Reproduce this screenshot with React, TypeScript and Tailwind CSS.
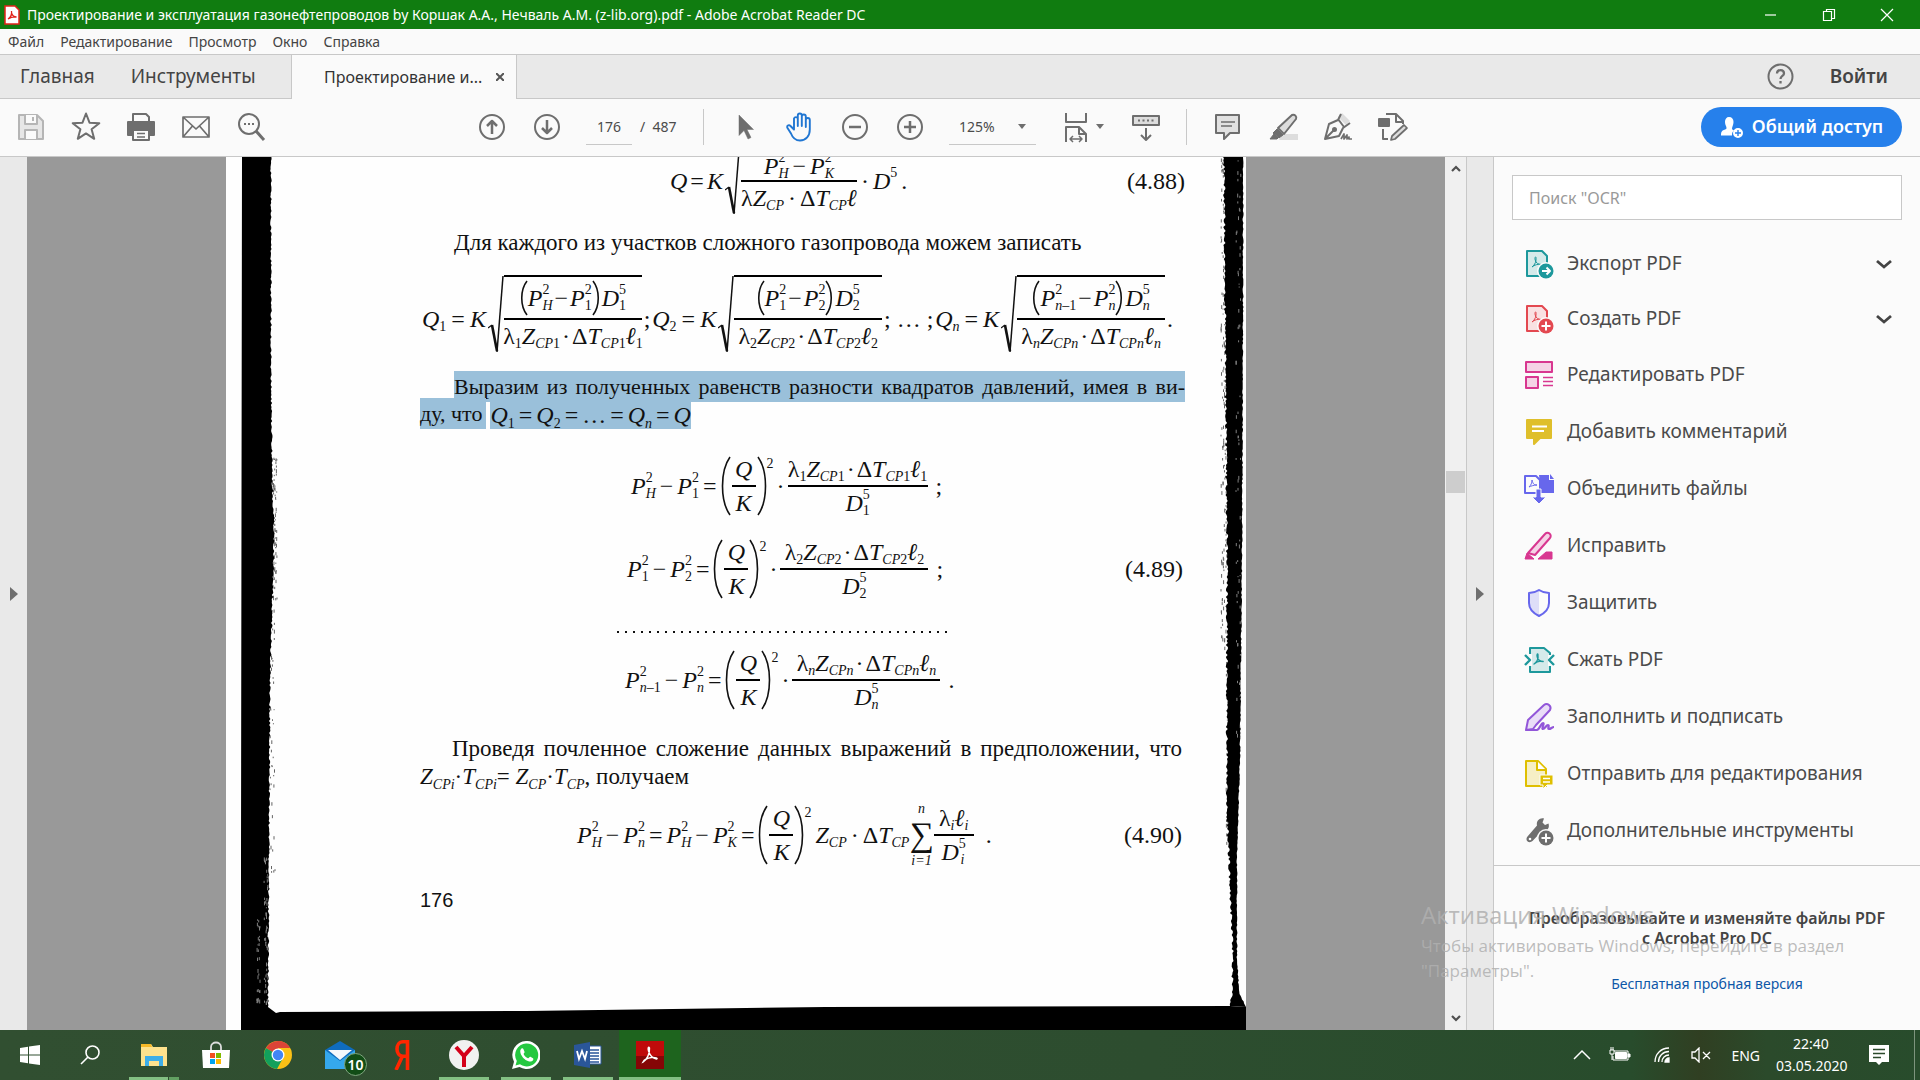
import React from "react";

type Kids = { children?: React.ReactNode };

/* ---------- Formula building blocks ---------- */

function V({ c, sup, sub = "" }: { c: string; sup?: string; sub?: string }) {
  const letters = sub.replace(/[0-9]+$/, "");
  const digits = sub.slice(letters.length);
  return (
    <span className="inline-flex items-center">
      {c === "λ" ? <span>λ</span> : <i>{c}</i>}
      <span className="inline-flex flex-col">
        <sup className="static top-0 h-4 text-[14px] leading-4">{sup}</sup>
        <sub className="static bottom-0 h-4 text-[14px] leading-4">
          <i>{letters}</i>
          {digits}
        </sub>
      </span>
    </span>
  );
}

function Frac({ top, bottom, className = "" }: { top: React.ReactNode; bottom: React.ReactNode; className?: string }) {
  return (
    <span className={"inline-flex flex-col text-center " + className}>
      <span className="flex h-[35px] items-center justify-center border-b border-black pt-0.5">{top}</span>
      <span className="flex h-[35px] items-center justify-center border-t border-black pb-0.5">{bottom}</span>
    </span>
  );
}

function Root({ top, bottom, className = "" }: { top: React.ReactNode; bottom: React.ReactNode; className?: string }) {
  return (
    <span className="ml-0.5 inline-flex">
      <svg className="h-[88px] w-4" viewBox="0 0 16 88" fill="none" stroke="#111">
        <path d="M0 53l4-3" strokeWidth="1.2" />
        <path d="M4 50l5 26" strokeWidth="2.6" />
        <path d="M9 77L15 1" strokeWidth="1.5" />
      </svg>
      <span className={"inline-flex flex-col " + className}>
        <span className="flex h-11 items-center justify-center border-t-2 border-b border-black">{top}</span>
        <span className="flex h-11 items-start justify-center border-t border-black">{bottom}</span>
      </span>
    </span>
  );
}

function Paren({ right, tall }: { right?: boolean; tall?: boolean }) {
  return (
    <svg className={tall ? "h-[60px] w-2.5" : "h-9 w-2"} viewBox={tall ? "0 0 10 60" : "0 0 8 36"} fill="none" stroke="#111" strokeWidth="1.6">
      {tall ? (
        <path d={right ? "M1 1C11 15 11 45 1 59" : "M9 1C-1 15-1 45 9 59"} />
      ) : (
        <path d={right ? "M1 1C8 10 8 26 1 35" : "M7 1C0 10 0 26 7 35"} />
      )}
    </svg>
  );
}

const Op = ({ children }: Kids) => <span className="px-1">{children}</span>;

function LZT({ n }: { n: string }) {
  return (
    <>
      <V c="λ" sub={n} />
      <V c="Z" sub={"CP" + n} />
      <span className="px-0.5">·</span>
      <span>Δ</span>
      <V c="T" sub={"CP" + n} />
      <V c="ℓ" sub={n} />
    </>
  );
}

function QK() {
  return (
    <span className="inline-flex items-center">
      <Paren tall />
      <Frac className="mx-px w-6" top={<i>Q</i>} bottom={<i>K</i>} />
      <Paren tall right />
      <sup className="static h-[60px] text-[14px] leading-4">2</sup>
    </span>
  );
}

function QRoot({ n, a, b }: { n: string; a: string; b: string }) {
  return (
    <span className="inline-flex items-center">
      <V c="Q" sub={n} />
      <span className="px-[5px]">=</span>
      <i>K</i>
      <Root
        className={n === "1" ? "w-[138px]" : "w-[148px]"}
        top={
          <>
            <Paren />
            <V c="P" sup="2" sub={a} />
            <span className="px-0.5">−</span>
            <V c="P" sup="2" sub={b} />
            <Paren right />
            <span className="w-0.5" />
            <V c="D" sup="5" sub={n} />
          </>
        }
        bottom={<LZT n={n} />}
      />
    </span>
  );
}

function DiffRow({ a, b, n, end, wide }: { a: string; b: string; n: string; end: string; wide?: boolean }) {
  return (
    <div className="flex h-20 items-center">
      <V c="P" sup="2" sub={a} />
      <Op>−</Op>
      <V c="P" sup="2" sub={b} />
      <Op>=</Op>
      <QK />
      <span className="px-[3px]">·</span>
      <Frac className={wide ? "w-[148px]" : "w-[140px]"} top={<LZT n={n} />} bottom={<V c="D" sup="5" sub={n} />} />
      <span className="pl-2">{end}</span>
    </div>
  );
}

/* ---------- Scanned page ---------- */

function noise(i: number) {
  const s = Math.sin(i * 127.1) * 43758.5453;
  return s - Math.floor(s);
}

function edge(points: [number, number][], amp: number, seed: number) {
  const out: string[] = [];
  for (let k = 0; k < points.length - 1; k++) {
    const [x0, y0] = points[k];
    const [x1, y1] = points[k + 1];
    const n = Math.max(1, Math.round(Math.abs(y1 - y0) / 2));
    for (let j = 0; j < n; j++) {
      const t = j / n;
      out.push((x0 + (x1 - x0) * t + (noise(seed + k * 991 + j) - 0.5) * amp).toFixed(1) + "," + (y0 + (y1 - y0) * t).toFixed(1));
    }
  }
  const last = points[points.length - 1];
  out.push(last[0] + "," + last[1]);
  return out.join(" ");
}

function specks(x: number, w: number, y: number, h: number, count: number, seed: number) {
  let d = "";
  for (let i = 0; i < count; i++) {
    const px = x + noise(seed + i) * w;
    const py = y + noise(seed + 500 + i) * h;
    d += "M" + px.toFixed(1) + " " + py.toFixed(1) + "v" + (1 + noise(seed + 900 + i) * 3).toFixed(1);
  }
  return d;
}

function ScanEdges() {
  const left = edge([[45, 0], [45, 200], [46, 320], [48, 380], [46, 460], [44, 520], [43, 700], [42, 850]], 1.6, 3);
  const rightIn = edge([[998, 0], [999, 150], [1001, 400], [1001, 650], [1004, 730], [1007, 800], [1006, 835], [1004, 849]], 2.5, 50);
  const rightOut = edge([[1020, 850], [1013, 835], [1011, 800], [1011, 700], [1014, 600], [1016, 400], [1017, 150], [1017, 0]], 1, 90);
  return (
    <svg className="absolute inset-0 h-full w-full" viewBox="0 0 1020 873" preserveAspectRatio="none" aria-hidden="true">
      <polygon points={"16,0 " + left + " 50,856 54,855 300,854 600,850 1004,849 1020,850 1020,873 15,873 15,700"} fill="#000" />
      <polygon points={rightIn + " " + rightOut} fill="#000" />
      <path d={specks(46, 5, 300, 150, 80, 11) + specks(44, 5, 450, 280, 40, 31) + specks(995, 6, 0, 500, 170, 71) + specks(1000, 4, 500, 200, 40, 91)} stroke="#000" strokeWidth="1" opacity="0.6" />
      <path d={specks(31, 3, 760, 90, 30, 131) + specks(38, 4, 700, 150, 50, 171) + specks(1010, 5, 0, 600, 70, 211)} stroke="#fff" strokeWidth="1" opacity="0.5" />
    </svg>
  );
}

function ScannedPage() {
  return (
    <article className="relative w-[1020px] shrink-0 overflow-hidden bg-[#fefefe] pr-[61px] pl-[194px] font-['Liberation_Serif',serif] text-[24px] leading-8 text-[#111]">
      <ScanEdges />
      <div className="relative">
        <div className="-mt-5 flex h-[88px] items-center pl-[250px]">
          <i>Q</i>
          <span className="px-[3px]">=</span>
          <i>K</i>
          <Root
            className="w-[116px]"
            top={
              <span className="flex items-center pt-3">
                <V c="P" sup="2" sub="H" />
                <Op>−</Op>
                <V c="P" sup="2" sub="K" />
              </span>
            }
            bottom={
              <>
                <span>λ</span>
                <V c="Z" sub="CP" />
                <Op>·</Op>Δ
                <V c="T" sub="CP" />
                <i>ℓ</i>
              </>
            }
          />
          <span className="px-1">·</span>
          <V c="D" sup="5" />
          <Op>.</Op>
          <span className="ml-auto">(4.88)</span>
        </div>

        <p className="mt-0.5 h-[31px] pl-[34px] text-[23px] leading-[31px] whitespace-nowrap">
          Для каждого из участков сложного газопровода можем записать
        </p>

        <div className="mt-[17px] flex h-[88px] items-center justify-between pl-0.5">
          <QRoot n="1" a="H" b="1" />
          <span>;</span>
          <QRoot n="2" a="1" b="2" />
          <span>;&nbsp;…&nbsp;;</span>
          <QRoot n="n" a="n–1" b="n" />
          <span className="pr-3">.</span>
        </div>

        <div className="mt-2 text-[22px] leading-[31px] whitespace-nowrap">
          <p className="ml-[34px] h-[31px] bg-[#9ac0da] [text-align-last:justify]">
            Выразим из полученных равенств разности квадратов давлений, имея в ви-
          </p>
          <p className="-mt-1 flex h-[31px]">
            <span className="bg-[#9ac0da] pr-1">ду, что</span>
            <span className="mt-1 ml-1 flex h-[27px] items-center bg-[#9ac0da] text-[24px]">
              <V c="Q" sub="1" />
              <Op>=</Op>
              <V c="Q" sub="2" />
              <Op>=</Op>…<Op>=</Op>
              <V c="Q" sub="n" />
              <Op>=</Op>
              <i>Q</i>
            </span>
          </p>
        </div>

        <div className="mt-[17px] pl-[211px]">
          <DiffRow a="H" b="1" n="1" end=";" />
        </div>
        <div className="mt-[3px] flex items-center justify-between pl-[207px]">
          <DiffRow a="1" b="2" n="2" end=";" wide />
          <span className="mr-0.5">(4.89)</span>
        </div>
        <div className="mt-[13px] flex h-5 items-center pl-[197px]">
          <span className="h-0.5 w-[336px] bg-[repeating-linear-gradient(90deg,#111_0_2px,transparent_2px_8px)]" />
        </div>
        <div className="-mt-0.5 pl-[205px]">
          <DiffRow a="n–1" b="n" n="n" end="." wide />
        </div>

        <div className="mt-[15px] text-[23px] leading-7 whitespace-nowrap">
          <p className="mr-[3px] ml-8 [text-align-last:justify]">
            Проведя почленное сложение данных выражений в предположении, что
          </p>
          <p className="flex h-7 items-center">
            <V c="Z" sub="CPi" />·<V c="T" sub="CPi" />=&nbsp;
            <V c="Z" sub="CP" />·<V c="T" sub="CP" />, получаем
          </p>
        </div>

        <div className="mt-1 flex h-20 items-center pl-[157px]">
          <V c="P" sup="2" sub="H" />
          <Op>−</Op>
          <V c="P" sup="2" sub="n" />
          <Op>=</Op>
          <V c="P" sup="2" sub="H" />
          <Op>−</Op>
          <V c="P" sup="2" sub="K" />
          <Op>=</Op>
          <QK />
          <span className="w-1" />
          <V c="Z" sub="CP" />
          <Op>·</Op>Δ
          <V c="T" sub="CP" />
          <span className="flex flex-col items-center text-[14px] leading-4">
            <i>n</i>
            <span className="text-[34px] leading-9">∑</span>
            <i>i=1</i>
          </span>
          <Frac
            className="w-10"
            top={
              <>
                <V c="λ" sub="i" />
                <V c="ℓ" sub="i" />
              </>
            }
            bottom={<V c="D" sup="5" sub="i" />}
          />
          <span className="pl-3">.</span>
          <span className="mr-[3px] ml-auto">(4.90)</span>
        </div>

        <p className="mt-[11px] h-7 font-['Liberation_Sans',sans-serif] text-[20px] leading-7">176</p>
      </div>
    </article>
  );
}

/* ---------- Icons ---------- */

function Icon({ children, className = "size-8" }: Kids & { className?: string }) {
  return (
    <svg className={className} viewBox="0 0 32 32" fill="none" stroke="#6e6e6e" strokeWidth="2" strokeLinejoin="round" aria-hidden="true">
      {children}
    </svg>
  );
}

const Caret = () => (
  <svg className="h-[5px] w-2" viewBox="0 0 8 5" fill="#6e6e6e" aria-hidden="true">
    <path d="M0 0h8L4 5z" />
  </svg>
);

const icons = {
  save: (
    <Icon>
      <path d="M4 4h18l6 6v18H4z" stroke="#b5b5b5" fill="#e6e6e6" />
      <path d="M10 4v9h12V4M10 28v-9h12v9M18 6v4" stroke="#b5b5b5" fill="#fafafa" />
    </Icon>
  ),
  star: (
    <Icon>
      <path d="M16 2.500l3.500 9.200 9.800.5-7.700 6.100 2.600 9.500-8.200-5.400-8.200 5.400 2.600-9.500-7.700-6.100 9.800-.5z" />
    </Icon>
  ),
  print: (
    <Icon>
      <path d="M8 12V3h13l3 3v6" />
      <path d="M3 11h26v13h-5v-5H8v5H3z" fill="#6e6e6e" />
      <path d="M8 19h16v10H8z" fill="#fafafa" />
      <path d="M12 22.500h8M12 26h8" strokeWidth="1.500" />
    </Icon>
  ),
  mail: (
    <Icon>
      <path d="M3 6h26v20H3zM3 6l13 12L29 6M3 26l9.500-11M29 26l-9.500-11" strokeWidth="1.700" />
    </Icon>
  ),
  find: (
    <Icon>
      <circle cx="14" cy="13" r="10" />
      <path d="M21 20l8 9" strokeWidth="3" />
      <path d="M9 13h2M13 13h2M17 13h2" />
    </Icon>
  ),
  up: (
    <Icon>
      <circle cx="16" cy="16" r="12" />
      <path d="M16 23V10M11 15l5-5 5 5" strokeWidth="2.500" />
    </Icon>
  ),
  down: (
    <Icon>
      <circle cx="16" cy="16" r="12" />
      <path d="M16 9v13M11 17l5 5 5-5" strokeWidth="2.500" />
    </Icon>
  ),
  select: (
    <Icon>
      <path d="M10 4v20.500l5-5 4 8.500 3-1.500-4-8h6.500z" fill="#6e6e6e" strokeWidth="0.500" />
    </Icon>
  ),
  hand: (
    <Icon>
      <path
        d="M10 17V7.500a2 2 0 0 1 3.800 0V15V4.500a2 2 0 0 1 4 0V15V5.500a2 2 0 0 1 4 0V16V9a2 2 0 0 1 4 0v9.500C25.800 25 22 29.500 16 29.500c-5 0-7.500-3-9-7L3.200 16.500c-.6-2 2-3 3.300-1.500L10 18.500z"
        stroke="#2076d2"
        strokeWidth="1.900"
      />
    </Icon>
  ),
  minus: (
    <Icon>
      <circle cx="16" cy="16" r="12" />
      <path d="M10 16h12" strokeWidth="2.500" />
    </Icon>
  ),
  plus: (
    <Icon>
      <circle cx="16" cy="16" r="12" />
      <path d="M10 16h12M16 10v12" strokeWidth="2.500" />
    </Icon>
  ),
  fit: (
    <Icon>
      <path d="M6 2v9h20V2M6 31V16h13l7 7v8M19 16v7h7" />
      <path d="M10 28h12M13 25l-3 3 3 3M19 25l3 3-3 3" strokeWidth="1.500" />
    </Icon>
  ),
  keys: (
    <Icon>
      <path d="M3 5h26v9H3z" fill="#ddd" />
      <path d="M8 9.500h2M12.500 9.500h2M17 9.500h2M21.500 9.500h2" />
      <path d="M16 17v12M11 24l5 5 5-5" />
    </Icon>
  ),
  comment: (
    <Icon>
      <path d="M4 4h23v18h-9l-6 6v-6H4z" fill="#e1e1e1" />
      <path d="M9 11h14M9 15h11" strokeWidth="1.500" />
    </Icon>
  ),
  marker: (
    <Icon>
      <path d="M16 23h15v6H12z" fill="#ddd" stroke="none" />
      <path d="M11 17L25 4a3 3 0 0 1 4 4L17 23z" fill="#ddd" />
      <path d="M10 18l6 6-4 3-6-5zM3 28l4-5 4 4-1 1z" fill="#6e6e6e" strokeWidth="1" />
    </Icon>
  ),
  pen: (
    <Icon>
      <path d="M20 2l8 8-4 4-8-8z" fill="#ddd" stroke="none" />
      <path d="M19 3l-3 6-9 4-4 15 14-3 4-8 7-5M16 8l6 8M4 27l8-8" />
      <circle cx="12.500" cy="18.500" r="1.500" fill="#6e6e6e" />
      <path d="M19 28l3-5v5l3-4v4l2-2v2h3" strokeWidth="1.700" />
    </Icon>
  ),
  stamp: (
    <Icon>
      <path d="M9 3h10l7 7v3M19 3v8h7M6 18v10h5" />
      <path d="M2 8h10v7H2z" fill="#6e6e6e" />
      <path d="M14 29l1-4 12-11 3 3-12 11z" fill="#ddd" strokeWidth="1.700" />
    </Icon>
  ),
};

function ToolButton({ label, children, className = "w-[55px]" }: Kids & { label: string; className?: string }) {
  return (
    <button type="button" aria-label={label} title={label} className={"flex h-12 items-center justify-center gap-1 " + className}>
      {children}
    </button>
  );
}

const swoosh = "M11 20c3-2 4.500-6 4-9.500-.5-1.500-1.500 0-.8 2.500.8 3 3 4.500 6 4.500-3-.8-7 .5-9.200 2.500z";

const tools: { label: string; icon: React.ReactNode; more?: boolean }[] = [
  {
    label: "Экспорт PDF",
    more: true,
    icon: (
      <>
        <path d="M4 3h15l5 5v20H4z" fill="#d5eaea" stroke="#1d989c" />
        <path d={swoosh} stroke="#1d989c" strokeWidth="1" transform="translate(-2 -1)" />
        <circle cx="23" cy="23" r="9" fill="#fbfbfb" stroke="none" />
        <circle cx="23" cy="23" r="7.500" fill="#1d989c" stroke="none" />
        <path d="M19 23h7M23.500 19.500L27 23l-3.500 3.500" stroke="#fff" />
      </>
    ),
  },
  {
    label: "Создать PDF",
    more: true,
    icon: (
      <>
        <path d="M4 3h15l5 5v20H4z" fill="#f9e1e2" stroke="#e34850" />
        <path d={swoosh} stroke="#e34850" strokeWidth="1" transform="translate(-2 -1)" />
        <circle cx="23" cy="23" r="9" fill="#fbfbfb" stroke="none" />
        <circle cx="23" cy="23" r="7.500" fill="#e34850" stroke="none" />
        <path d="M18.500 23h9M23 18.500v9" stroke="#fff" />
      </>
    ),
  },
  {
    label: "Редактировать PDF",
    icon: (
      <g stroke="#d83790">
        <path d="M3 3h26v10H3zM3 18h12v11H3z" fill="#f5d3e6" />
        <path d="M20 18.500h10M20 22.500h10M20 26.500h10" strokeWidth="1.300" />
      </g>
    ),
  },
  {
    label: "Добавить комментарий",
    icon: (
      <>
        <path d="M4 4h24v18H17l-6 6v-6H4z" fill="#dfbf2b" stroke="#dfbf2b" />
        <path d="M9 10.500h15M9 15h12" stroke="#fff" />
      </>
    ),
  },
  {
    label: "Объединить файлы",
    icon: (
      <g stroke="#6767ec">
        <path d="M16 2h10v5h5v13H18z" fill="#6767ec" stroke="none" />
        <path d="M27 1l4 5h-4z" fill="#6767ec" stroke="none" />
        <path d="M2 3h11l4 4v13H2z" fill="#fbfbfb" />
        <path d="M6 14c2-2 3-4 3-7 1 4 2 5 5 5-3 0-6 1-8 2z" strokeWidth="1" />
        <path d="M13 16h5v8h5l-7 7-7-7h4z" fill="#6767ec" stroke="#fbfbfb" strokeWidth="1" />
      </g>
    ),
  },
  {
    label: "Исправить",
    icon: (
      <g stroke="#d83790">
        <path d="M5 23L22 4a3 3 0 0 1 5 4L12 25z" fill="#f5d3e6" />
        <path d="M2 29l2-6 7 6zM15 29l8-7h6v7z" fill="#d83790" strokeWidth="1" />
      </g>
    ),
  },
  {
    label: "Защитить",
    icon: (
      <>
        <path d="M16 3c-3 2-6 3-10 3v10c0 6 4 10 10 13z" fill="#dedef8" stroke="none" />
        <path d="M16 3c3 2 6 3 10 3v10c0 6-4 10-10 13C10 26 6 22 6 16V6c4 0 7-1 10-3z" stroke="#6767ec" />
      </>
    ),
  },
  {
    label: "Сжать PDF",
    icon: (
      <g stroke="#1d989c">
        <path d="M9 9h16v14H9z" fill="#d5eaea" stroke="none" />
        <path d="M7 10V4h14l6 5v2M7 22v6h20v-6" fill="#d5eaea" />
        <path d="M2 11l5 5-5 5M31 11l-5 5 5 5" strokeWidth="2.400" />
        <path d={swoosh} strokeWidth="1.300" />
      </g>
    ),
  },
  {
    label: "Заполнить и подписать",
    icon: (
      <g stroke="#9256d9">
        <path d="M3 29l2-10L21 4a4 4 0 0 1 6 5L13 24l-3 4z" fill="#e9ddf7" />
        <path d="M3 29h11c3-1 4-7 6-7s-2 6 0 6 3-4 5-4-1 4 1 4 3-2 5-2" strokeWidth="2.200" />
      </g>
    ),
  },
  {
    label: "Отправить для редактирования",
    icon: (
      <g stroke="#dfbf00">
        <path d="M3 3h12l8 8v17H3z" fill="#f6efc5" />
        <path d="M14 3v9h9" fill="#fff" />
        <path d="M17 17h13v10h-6l-4 4v-4h-3z" fill="#dfbf00" stroke="#fbfbfb" strokeWidth="1" />
        <path d="M20 20.500h7M20 24h7" stroke="#fff" strokeWidth="1.300" />
      </g>
    ),
  },
  {
    label: "Дополнительные инструменты",
    icon: (
      <>
        <path
          d="M25.500 8.500l-3.500 1.500-2.500-2.500L21 3.500c-4-1-8 2-7 7L4.500 21.500c-3 4 1.500 7.500 5 4.500L19 16c5 1 8-3 6.500-7.500z"
          fill="#6e6e6e"
          stroke="none"
        />
        <circle cx="7" cy="24" r="1.300" fill="#fff" stroke="none" />
        <circle cx="23" cy="23" r="9" fill="#fbfbfb" stroke="none" />
        <circle cx="23" cy="23" r="7.500" fill="#6e6e6e" stroke="none" />
        <path d="M18.500 23h9M23 18.500v9" stroke="#fff" />
      </>
    ),
  },
];

/* ---------- Window parts ---------- */

function TitleBar() {
  return (
    <header className="flex h-[29px] items-center bg-[#107c10] text-white">
      <svg className="mr-[7px] ml-1 h-5 w-4" viewBox="0 0 16 20" aria-hidden="true">
        <path d="M1 1h10l4 4v14H1z" fill="#fff" stroke="#e2231a" strokeWidth="1.500" />
        <path d="M4 14c3-2 4-5 3.500-8M7.500 8c1 3 3 4 5 4-3-.5-6 .5-8.500 2" fill="none" stroke="#e2231a" strokeWidth="1.300" />
      </svg>
      <h1 className="text-[14px] leading-5 whitespace-nowrap">
        Проектирование и эксплуатация газонефтепроводов by Коршак А.А., Нечваль А.М. (z-lib.org).pdf - Adobe Acrobat Reader DC
      </h1>
      <div className="mr-1 ml-auto flex">
        {[
          ["Свернуть", "M1 7h11"],
          ["Восстановить", "M1.500 3.500h8v9h-8zM4.500 3V1.500h8v9H10"],
          ["Закрыть", "M1 1l12 12M13 1L1 13"],
        ].map(([label, d]) => (
          <button key={label} type="button" aria-label={label} className="flex h-[29px] w-[58px] items-center justify-center">
            <svg className="size-3.5" viewBox="0 0 14 14" fill="none" stroke="#fff" strokeWidth="1.200">
              <path d={d} />
            </svg>
          </button>
        ))}
      </div>
    </header>
  );
}

function MenuBar() {
  return (
    <nav className="flex h-[26px] items-center gap-4 border-b border-[#c8c8c8] bg-[#fafafa] pl-2 text-[14px] text-[#444]">
      {["Файл", "Редактирование", "Просмотр", "Окно", "Справка"].map((m) => (
        <button key={m} type="button">
          {m}
        </button>
      ))}
    </nav>
  );
}

function TabStrip() {
  return (
    <div className="flex h-11 bg-[#e9e9e9] text-[#444]">
      <div className="flex w-[291px] items-center gap-9 border-b border-[#c8c8c8] pl-5 text-[19px]">
        <button type="button">Главная</button>
        <button type="button">Инструменты</button>
      </div>
      <div className="flex w-[226px] items-center border-x border-[#c8c8c8] bg-[#fafafa] pl-8 text-[16px] text-[#333]">
        <span className="whitespace-nowrap">Проектирование и...</span>
        <button type="button" aria-label="Закрыть вкладку" className="ml-auto p-3">
          <svg className="size-2" viewBox="0 0 8 8" stroke="#555" strokeWidth="2">
            <path d="M0 0l8 8M8 0L0 8" />
          </svg>
        </button>
      </div>
      <div className="flex flex-1 items-center justify-end gap-9 border-b border-[#c8c8c8] pr-8">
        <button type="button" aria-label="Справка">
          <svg className="size-[27px]" viewBox="0 0 27 27" fill="none" stroke="#6e6e6e" strokeWidth="2">
            <circle cx="13.500" cy="13.500" r="12" />
            <path d="M10 10.500c0-4.500 7-4.500 7 0 0 2.500-3.500 2.500-3.500 5.500M13.500 18v2.500" strokeWidth="2.300" />
          </svg>
        </button>
        <button type="button" className="text-[19px] font-semibold">
          Войти
        </button>
      </div>
    </div>
  );
}

function Toolbar() {
  return (
    <div className="flex h-[58px] items-center border-b border-[#c8c8c8] bg-[#fafafa] pb-0.5 pl-[3px] text-[14px] text-[#4b4b4b]">
      <ToolButton label="Сохранить">{icons.save}</ToolButton>
      <ToolButton label="Избранное">{icons.star}</ToolButton>
      <ToolButton label="Печать">{icons.print}</ToolButton>
      <ToolButton label="Отправить по почте">{icons.mail}</ToolButton>
      <ToolButton label="Найти">{icons.find}</ToolButton>
      <ToolButton label="Предыдущая страница" className="ml-[186px] w-[55px]">
        {icons.up}
      </ToolButton>
      <ToolButton label="Следующая страница">{icons.down}</ToolButton>
      <input aria-label="Номер страницы" defaultValue="176" className="ml-3 h-9 w-[46px] border-b border-[#c8c8c8] bg-transparent text-center outline-none" />
      <span className="w-[71px] pl-2 whitespace-nowrap">/&nbsp; 487</span>
      <span className="mr-[13px] h-9 w-px bg-[#c8c8c8]" />
      <ToolButton label="Выделение">{icons.select}</ToolButton>
      <ToolButton label="Рука">{icons.hand}</ToolButton>
      <ToolButton label="Уменьшить">{icons.minus}</ToolButton>
      <ToolButton label="Увеличить">{icons.plus}</ToolButton>
      <div className="ml-3 flex h-9 w-[87px] items-center border-b border-[#c8c8c8] pr-2.5">
        <select aria-label="Масштаб" className="flex-1 appearance-none bg-transparent pl-2.5 outline-none">
          <option>125%</option>
        </select>
        <Caret />
      </div>
      <ToolButton label="По ширине" className="ml-[18px] w-[56px]">
        {icons.fit}
        <Caret />
      </ToolButton>
      <ToolButton label="Показать панель" className="ml-2 w-[55px]">
        {icons.keys}
      </ToolButton>
      <span className="mr-[13px] ml-[13px] h-9 w-px bg-[#c8c8c8]" />
      <ToolButton label="Комментарий">{icons.comment}</ToolButton>
      <ToolButton label="Маркер">{icons.marker}</ToolButton>
      <ToolButton label="Подпись">{icons.pen}</ToolButton>
      <ToolButton label="Штамп">{icons.stamp}</ToolButton>
      <button type="button" className="mr-[18px] ml-auto flex h-10 w-[201px] items-center justify-center gap-2 rounded-full bg-[#2680eb] text-[18px] font-semibold whitespace-nowrap text-white">
        <svg className="size-6" viewBox="0 0 24 24" fill="#fff" aria-hidden="true">
          <path d="M9 2c3 0 4.500 2 4.500 5S12 12 12 13.500c0 1 1 1.500 2 2-2 1.500-2 3-2 5H1c0-4 1-5 4-6 1-.3 1.500-.5 1.500-1.500C6.500 11.500 5 10 5 7s1.500-5 4-5z" />
          <path fillRule="evenodd" d="M18 13a5 5 0 1 1 0 10 5 5 0 0 1 0-10zm-.7 2v2.300H15v1.400h2.300V21h1.400v-2.300H21v-1.400h-2.300V15z" />
        </svg>
        Общий доступ
      </button>
    </div>
  );
}

function ToolsPanel() {
  return (
    <aside className="flex w-[427px] shrink-0 flex-col border-l border-[#c8c8c8] bg-[#fbfbfb]">
      <input
        type="search"
        aria-label="Поиск инструментов"
        placeholder={'Поиск "OCR"'}
        className="mx-[18px] mt-[18px] h-[45px] border border-[#c8c8c8] bg-white px-4 text-[16px] outline-none placeholder:text-[#999]"
      />
      <ul className="mt-4 text-[19px] text-[#4b4b4b]">
        {tools.map((t) => (
          <li key={t.label}>
            <button type="button" className={"flex w-full items-center pr-6 pl-[29px] " + (t.more ? "h-[55px]" : "h-[57px]")}>
              <Icon>{t.icon}</Icon>
              <span className="ml-3 whitespace-nowrap">{t.label}</span>
              {t.more && (
                <svg className="ml-auto h-4 w-6" viewBox="0 0 24 16" fill="none" stroke="#444" strokeWidth="2.800" aria-hidden="true">
                  <path d="M5 5l7 6 7-6" />
                </svg>
              )}
            </button>
          </li>
        ))}
      </ul>
      <div className="mt-1.5 border-t border-[#c8c8c8] pt-[42px] text-center text-[#444]">
        <p className="text-[16px] leading-5 font-semibold whitespace-nowrap">
          Преобразовывайте и изменяйте файлы PDF
          <br />с Acrobat Pro DC
        </p>
        <a href="#trial" className="mt-[26px] inline-block text-[14px] leading-5 text-[#0d57a8]">
          Бесплатная пробная версия
        </a>
      </div>
    </aside>
  );
}

/* ---------- Taskbar ---------- */

function TaskItem({ label, running, active, children }: Kids & { label: string; running?: boolean; active?: boolean }) {
  return (
    <button
      type="button"
      aria-label={label}
      className={"relative flex h-[50px] w-[62px] items-center justify-center " + (active ? "bg-[#1e641e]" : "")}
    >
      {children}
      {running && <span className={"absolute bottom-0 h-[3px] bg-[#83c083] " + (active ? "inset-x-0" : "inset-x-1.5")} />}
    </button>
  );
}

function Taskbar() {
  return (
    <footer className="flex h-[50px] shrink-0 items-center bg-[linear-gradient(90deg,#314f31_0%,#2d4d2f_60%,#284c2c_85%,#303f22_88.500%,#2b4a2b_92%,#284c2c_100%)] text-white">
      <div className="-ml-px flex">
        <TaskItem label="Пуск">
          <svg className="size-5" viewBox="0 0 20 20" fill="#fff">
            <path d="M0 3l8-1.200V9.500H0zM9 1.600L20 0v9.500H9zM0 10.500h8v7.700L0 17zM9 10.500h11V20L9 18.400z" />
          </svg>
        </TaskItem>
        <TaskItem label="Поиск">
          <svg className="mr-1 size-5" viewBox="0 0 20 20" fill="none" stroke="#fff" strokeWidth="1.600">
            <circle cx="12.500" cy="7.500" r="6.500" />
            <path d="M8 12l-7 7" />
          </svg>
        </TaskItem>
        <TaskItem label="Проводник" running>
          <svg className="h-6 w-7" viewBox="0 0 28 24">
            <path d="M1 1h10l2 3h14v19H1z" fill="#ffe28d" />
            <path d="M1 1h10l1 3H1z" fill="#f7b928" />
            <path d="M5 23V13h18v10h-4v-5h-10v5z" fill="#3faee8" />
          </svg>
          <span className="absolute right-1.5 bottom-0 z-10 h-[3px] w-[11px] border-l border-[#2d4d2f] bg-[#62a062]" />
        </TaskItem>
        <TaskItem label="Магазин">
          <svg className="size-7" viewBox="0 0 28 28">
            <path d="M9 10V6c0-6 10-6 10 0v4" fill="none" stroke="#ddd" strokeWidth="1.800" />
            <path d="M0 9h28l-1 18H1z" fill="#fff" />
            <path d="M8 12h5v5H8z" fill="#f25022" />
            <path d="M14 12h5v5h-5z" fill="#7fba00" />
            <path d="M8 18h5v5H8z" fill="#00a4ef" />
            <path d="M14 18h5v5h-5z" fill="#ffb900" />
          </svg>
        </TaskItem>
        <TaskItem label="Chrome">
          <svg className="size-7" viewBox="0 0 28 28">
            <circle cx="14" cy="14" r="14" fill="#fbc116" />
            <path d="M14 14L1.900 7A14 14 0 0 1 26.100 7H14z" fill="#db4437" />
            <path d="M14 0A14 14 0 0 1 26.100 7H14z" fill="#db4437" />
            <path d="M1.900 7A14 14 0 0 0 13 28l6-11-5-3z" fill="#12a05c" />
            <circle cx="14" cy="14" r="6.500" fill="#fff" />
            <circle cx="14" cy="14" r="5.200" fill="#4285f4" />
          </svg>
        </TaskItem>
        <TaskItem label="Почта">
          <svg className="h-7 w-[30px]" viewBox="0 0 30 28">
            <path d="M0 9L15 0l15 9v19H0z" fill="#0f6cbd" />
            <path d="M0 9l15 11L30 9v19H0z" fill="#35a8ec" />
            <path d="M3 9h24L15 19z" fill="#f4f8fb" />
          </svg>
          <span className="absolute right-1 bottom-1 flex size-[23px] items-center justify-center rounded-full border border-[#7fa57f] bg-[#114d16] text-[14px] leading-none font-semibold">
            10
          </span>
        </TaskItem>
        <TaskItem label="Яндекс">
          <svg className="h-[30px] w-4" viewBox="0 0 16 30" fill="none" stroke="#ff2600" strokeWidth="3.600" aria-hidden="true">
            <path d="M13.500 30V1.800H9c-8 0-8 14.500 0 14.500h4.500M8.500 16L2 30" />
          </svg>
        </TaskItem>
        <TaskItem label="Яндекс.Браузер" running>
          <svg className="size-[30px]" viewBox="0 0 30 30">
            <circle cx="15" cy="15" r="15" fill="#f1f1f1" />
            <path d="M7 7l8 9 8-9M15 15v12" fill="none" stroke="#d4001a" strokeWidth="4" />
          </svg>
        </TaskItem>
        <TaskItem label="WhatsApp" running>
          <svg className="size-7" viewBox="0 0 28 28">
            <path d="M14 0a14 14 0 1 1-6.500 26L0 28l2-7.300A14 14 0 0 1 14 0z" fill="#fff" />
            <path d="M14 2.500A11.500 11.500 0 1 1 8 23.300L3.500 24.500 4.800 20A11.500 11.500 0 0 1 14 2.500z" fill="#25c840" />
            <path d="M9.500 7.500c-4 3 2.500 13.500 9.500 13 2-.3 3-2.500 2-3.300l-2.600-1.500c-1-.3-1.500 1.800-2.400 1.500-2-.7-3.800-2.700-4.400-4.200 0-.8 1.200-1 1-2l-1.200-3c-.3-.7-1-.8-1.900-.5z" fill="#fff" />
          </svg>
        </TaskItem>
        <TaskItem label="Word" running>
          <svg className="h-[26px] w-7" viewBox="0 0 28 26">
            <path d="M15 4h12v18H15z" fill="#fff" stroke="#2a5699" />
            <path d="M16 8h9M16 11h9M16 14h9M16 17h9M16 20h9" stroke="#2a5699" strokeWidth="1.300" />
            <path d="M0 3l16-3v26L0 23z" fill="#2a5699" />
            <path d="M3 9l2 8 3-8 3 8 2-8" fill="none" stroke="#fff" strokeWidth="1.800" />
          </svg>
        </TaskItem>
        <TaskItem label="Acrobat" running active>
          <svg className="size-7" viewBox="0 0 28 28">
            <path d="M0 0h28v28H0z" fill="#c00a0a" />
            <path d="M0 15h28v13H0z" fill="#850606" />
            <path d="M7 21c4-2 7-9 6.500-14-.8-2-2 0-1 3 1.500 4.500 4.500 7.500 8 8 2-.5-1-2-5-1.500S8 19 7 21z" fill="none" stroke="#fff" strokeWidth="1.400" />
          </svg>
        </TaskItem>
      </div>

      <div className="ml-auto flex h-full items-center">
        <button type="button" aria-label="Показать скрытые значки" className="w-[46px]">
          <svg className="mx-auto h-4 w-[18px]" viewBox="0 0 18 16" fill="none" stroke="#fff" strokeWidth="1.500">
            <path d="M1 12l8-8 8 8" />
          </svg>
        </button>
        <svg className="mr-2 ml-1 h-4 w-[22px]" viewBox="0 0 22 16" fill="none" stroke="#fff" aria-hidden="true">
          <path d="M5 4h14v9H4V9" />
          <path d="M6.500 5.500h11v6h-11zM19 7h2v3h-2z" fill="#fff" />
          <path d="M1 3h4v4H1zM2 0v3M4 0v3M3 7v6" />
        </svg>
        <svg className="mx-[15px] size-4" viewBox="0 0 16 16" fill="none" stroke="#fff" strokeWidth="1.300" aria-hidden="true">
          <path d="M1 15C1 7 7 1 15 1M4.500 15C4.500 9 9 4.500 15 4.500M8 15c0-4 3-7 7-7" />
          <path d="M11 15c0-2 2-4 4-4v4z" fill="#fff" />
        </svg>
        <svg className="mr-1 ml-1.5 h-4 w-5" viewBox="0 0 20 16" fill="none" stroke="#fff" strokeWidth="1.300" aria-hidden="true">
          <path d="M1 5h3l4-4v14l-4-4H1zM12 5l7 7M19 5l-7 7" />
        </svg>
        <span className="ml-4 text-[14px]">ENG</span>
        <time className="ml-4 w-[70px] text-center text-[14px] leading-[22px]">
          22:40
          <br />
          03.05.2020
        </time>
        <button type="button" aria-label="Уведомления" className="ml-[23px]">
          <svg className="size-5" viewBox="0 0 20 20" fill="#fff">
            <path d="M0 0h20v17h-7l-3 3-3-3H0z" />
            <path d="M4 4.500h12M4 8.500h12M4 12.500h8" stroke="#2b4a2b" strokeWidth="1.300" />
          </svg>
        </button>
        <span className="mr-[5px] ml-[25px] h-full w-px bg-[#7d947d]" />
      </div>
    </footer>
  );
}

const Triangle = () => (
  <svg className="h-3.5 w-2" viewBox="0 0 8 14" fill="#6e6e6e" aria-hidden="true">
    <path d="M0 0l8 7-8 7z" />
  </svg>
);

const Arrow = ({ d }: { d: string }) => (
  <svg className="h-[7px] w-2.5" viewBox="0 0 10 7" fill="none" stroke="#505050" strokeWidth="2.200">
    <path d={d} />
  </svg>
);

export default function App() {
  return (
    <div className="relative flex h-screen flex-col overflow-hidden bg-[#fafafa] font-['Noto_Sans','Open_Sans',sans-serif]">
      <TitleBar />
      <MenuBar />
      <TabStrip />
      <Toolbar />
      <div className="flex min-h-0 flex-1">
        <button type="button" aria-label="Показать панель навигации" className="flex w-[27px] shrink-0 items-center justify-center bg-[#e9e9e9]">
          <Triangle />
        </button>
        <main className="flex min-w-0 flex-1 justify-center overflow-hidden bg-[#999]">
          <ScannedPage />
        </main>
        <div className="flex w-[21px] shrink-0 flex-col items-center bg-[#f0f0f0] py-2">
          <Arrow d="M1 6l4-4 4 4" />
          <div className="flex w-[19px] flex-1 flex-col">
            <span className="grow-[36]" />
            <span className="h-[22px] bg-[#cdcdcd]" />
            <span className="grow-[63]" />
          </div>
          <Arrow d="M1 1l4 4 4-4" />
        </div>
        <button type="button" aria-label="Скрыть панель инструментов" className="flex w-[27px] shrink-0 items-center justify-center border-l border-[#c8c8c8] bg-[#e9e9e9]">
          <Triangle />
        </button>
        <ToolsPanel />
      </div>
      <Taskbar />
      <div className="pointer-events-none absolute right-[70px] bottom-[97px] w-[429px] font-['Open_Sans',sans-serif] text-[#b0b0b0]/85">
        <p className="text-[24px] leading-9">Активация Windows</p>
        <p className="text-[17px] leading-[25px]">
          Чтобы активировать Windows, перейдите в раздел
          <br />
          "Параметры".
        </p>
      </div>
    </div>
  );
}
